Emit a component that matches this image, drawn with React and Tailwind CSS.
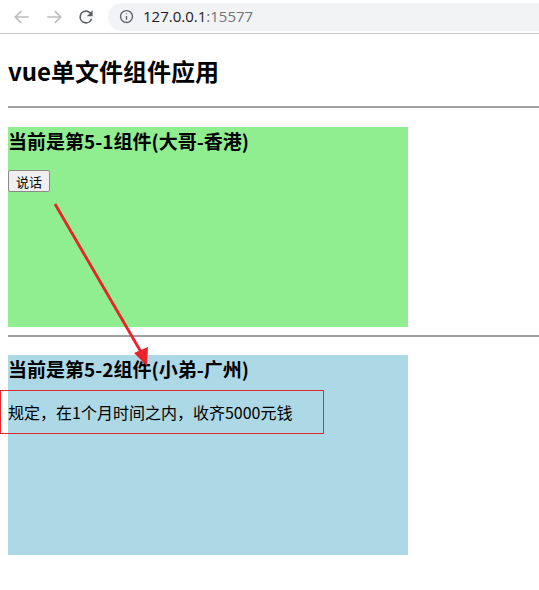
import React from 'react';

const cjk = { fontFamily: '"Noto Sans CJK SC", "Noto Sans", sans-serif' };

const BrowserBar = () => (
  <div className="flex h-[34px] items-center border-b border-[#c8c8c8] bg-white pl-[12px]">
    {/* back / forward / reload */}
    <svg width="20" height="20" viewBox="0 0 24 24" className="mr-[12px]" fill="none" stroke="#bdbdbd" strokeWidth="2">
      <path d="M20 12H5M11 5l-7 7 7 7" />
    </svg>
    <svg width="20" height="20" viewBox="0 0 24 24" className="mr-[12px]" fill="none" stroke="#bdbdbd" strokeWidth="2">
      <path d="M4 12h15M13 5l7 7-7 7" />
    </svg>
    <svg width="20" height="20" viewBox="0 0 24 24" fill="#5f6368">
      <path d="M17.65 6.35A7.95 7.95 0 0 0 12 4a8 8 0 1 0 7.75 10h-2.08A6 6 0 1 1 12 6c1.66 0 3.14.69 4.22 1.78L13 11h7V4l-2.35 2.35z" />
    </svg>
    <div className="ml-[12px] flex h-[28px] flex-1 items-center rounded-l-full bg-[#f1f3f4] pl-[11px]">
      <svg width="15" height="15" viewBox="0 0 24 24" fill="none" stroke="#5f6368" strokeWidth="2.2">
        <circle cx="12" cy="12" r="9.5" />
        <path d="M12 11v6M12 7v1.5" />
      </svg>
      <span className="ml-[9px] text-[15px] text-[#202124]" style={{ fontFamily: '"Open Sans", "Noto Sans", sans-serif' }}>
        127.0.0.1<span className="text-[#70757a]">:15577</span>
      </span>
    </div>
  </div>
);

export default function App() {
  return (
    <div className="relative h-[590px] w-[539px] overflow-hidden bg-white text-black" style={cjk}>
      <BrowserBar />

      <div className="pl-2">
        <h1 className="mt-[19px] h-[35px] text-[24px] font-bold leading-[35px]">vue单文件组件应用</h1>
        <hr className="mt-[18px] border-t-2 border-[#a0a0a0]" />

        <div className="mt-[19px] h-[200px] w-[400px] bg-[#90ee90]">
          <h3 className="pt-[1px] text-[19px] font-bold leading-[25px]">当前是第5-1组件(大哥-香港)</h3>
          <button className="mt-[17px] h-[22px] w-[42px] rounded-[2px] border border-[#8a8a8a] bg-[#efefef] text-[13px] leading-none">
            说话
          </button>
        </div>

        <hr className="mt-[8px] border-t-2 border-[#a0a0a0]" />

        <div className="mt-[18px] h-[200px] w-[400px] bg-[#add8e6]">
          <h3 className="pt-[1px] text-[19px] font-bold leading-[25px]">当前是第5-2组件(小弟-广州)</h3>
          <p className="mt-[19px] text-[16px] leading-[24px]">规定，在1个月时间之内，收齐5000元钱</p>
        </div>
      </div>

      {/* annotation overlays */}
      <div className="absolute left-0 top-[390px] h-[44px] w-[324px] border border-[#e8262c]" />
      <svg className="pointer-events-none absolute left-0 top-0" width="539" height="590">
        <line x1="55" y1="204" x2="141" y2="352" stroke="#e8232a" strokeWidth="2.8" />
        <polygon points="147,366 134,353 148,347" fill="#e8232a" />
      </svg>
    </div>
  );
}
